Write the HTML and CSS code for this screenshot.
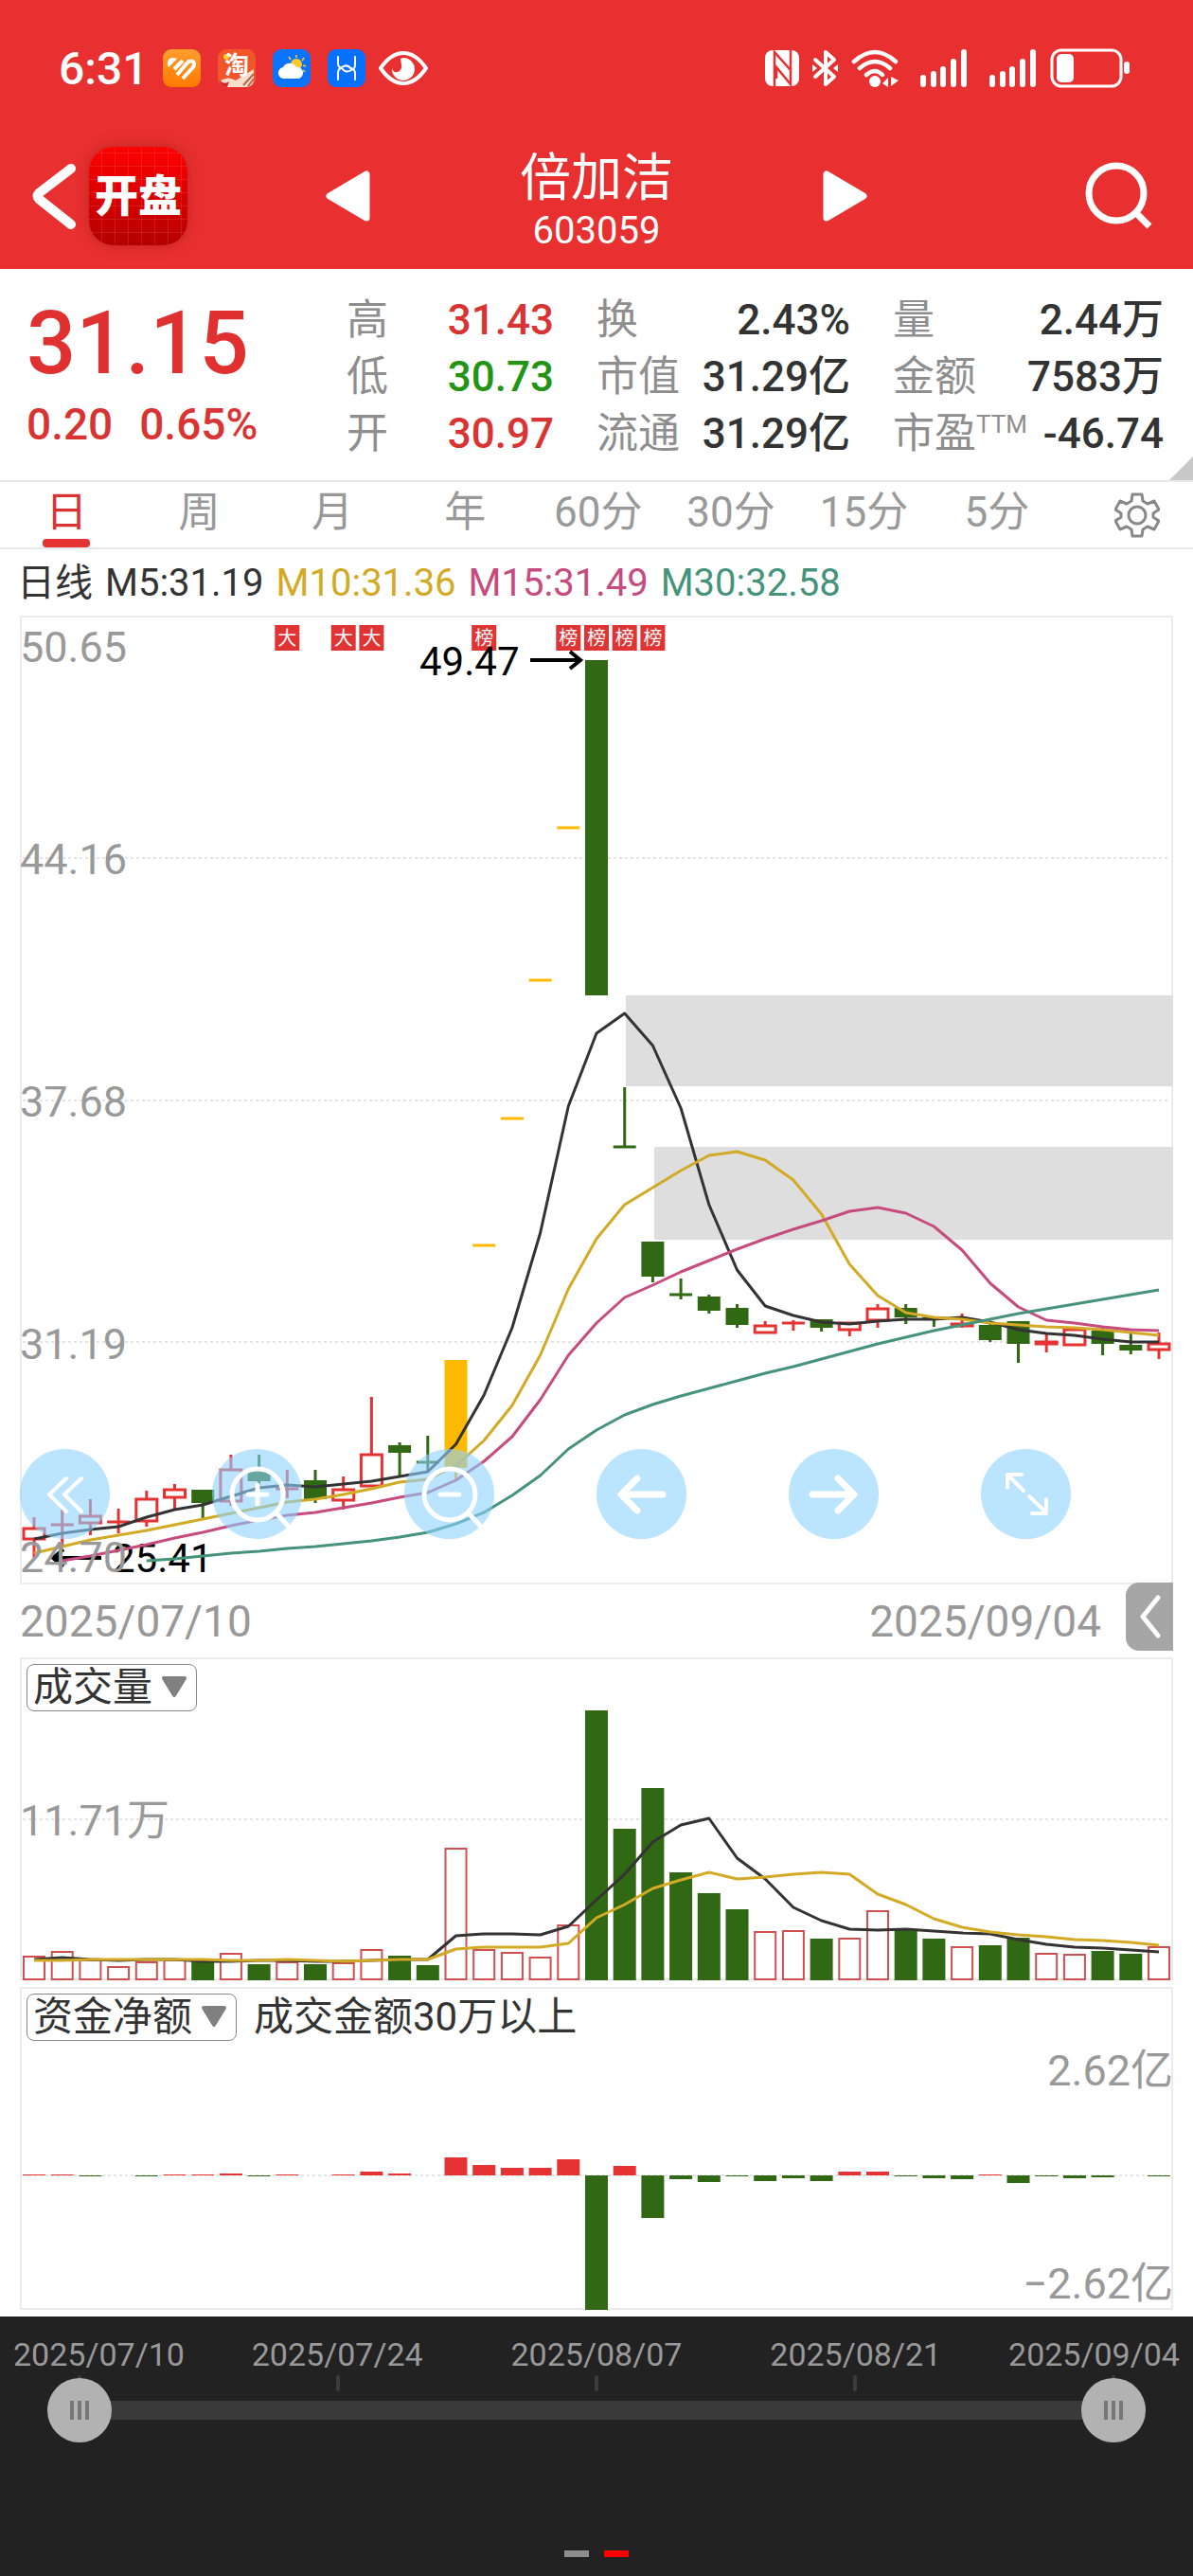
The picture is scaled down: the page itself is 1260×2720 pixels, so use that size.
FILE: index.html
```html
<!DOCTYPE html>
<html lang="zh-CN">

<head>
    <meta charset="UTF-8">
    <meta name="viewport" content="width=device-width, initial-scale=1">
    <title>倍加洁 603059</title>
    <link rel="stylesheet" href="styles.css">
</head>

<body>
    <header class="header">
        <div class="status">
            <span class="status-time">6:31</span>
            <div class="status-apps">
                <svg width="40" height="40" viewBox="0 0 40 40">
                    <defs>
                        <linearGradient id="gOrange" x1="0" y1="0" x2="0" y2="1">
                            <stop offset="0" stop-color="#ff9d2e" />
                            <stop offset="1" stop-color="#ff7a00" />
                        </linearGradient>
                    </defs>
                    <rect width="40" height="40" rx="9" fill="url(#gOrange)" />
                    <path d="M5 17q-1-8 6-8 3 0 4 1l-9 9z" fill="#fff" />
                    <path d="M12 21l9-9M15 27L27 13q6-2 6 3 0 2-2 4L21 31" fill="none" stroke="#fff" stroke-width="4" />
                </svg>
                <svg width="40" height="40" viewBox="0 0 40 40">
                    <rect width="40" height="40" rx="9" fill="#f2552a" />
                    <path d="M3 33q8-5 16 0l19-12v10q0 9-9 9H10q-5 0-7-7z" fill="#f7dfd0" />
                    <path d="M2 33q5 5 10 1l-2 6q-7 0-8-7z" fill="#d9232a" />
                    <path d="M27 38l11-12M32 39l6-8" stroke="#b5654a" stroke-width="2" />
                    <circle cx="9" cy="8" r="3" fill="#ffd21f" />
                    <text x="20" y="26" class="tao">淘</text>
                </svg>
                <svg width="40" height="40" viewBox="0 0 40 40">
                    <rect width="40" height="40" rx="9" fill="#0b74ff" />
                    <circle cx="25" cy="16" r="6" fill="#ffc928" />
                    <path d="M25 6v3M17 8l2 3M33 9l-2 3M35 18l-3-1M34 24l-2-2" stroke="#ffc928" stroke-width="1.5" />
                    <path d="M13 31a6 6 0 0 1-2-12 8 8 0 0 1 14 0 6 6 0 0 1 2 12z" fill="#fff" />
                </svg>
                <svg width="40" height="40" viewBox="0 0 40 40">
                    <rect width="40" height="40" rx="9" fill="#0670ff" />
                    <path d="M11 8v7M11 32v-7q0-4 4-6 6-4 10 2 4 1 4-5V8M29 32v-7q0-3-4-5M11 15q0 4 4 5 4 6 10 2" fill="none" stroke="#fff" stroke-width="2" stroke-linecap="round" />
                </svg>
                <svg width="52" height="40" viewBox="0 0 52 40">
                    <path d="M2 20Q13 4 26 4t24 16Q39 36 26 36T2 20z" fill="none" stroke="#fff" stroke-width="4" />
                    <path d="M26 9a12 12 0 1 1-12 11q1 5 6 4 5-2 4-8-1-5-1-6z" fill="#fff" />
                </svg>
            </div>
            <div class="status-icons">
                <svg width="36" height="38" viewBox="0 0 36 38">
                    <rect width="36" height="38" rx="8" fill="#fff" />
                    <path d="M10 38V2l17 19V10M27 0v36L12 18v12" fill="none" stroke="#e93030" stroke-width="2.5" />
                </svg>
                <svg width="27" height="40" viewBox="0 0 27 40">
                    <path d="M3 11l20 18-9 8V3l9 8L3 29" fill="none" stroke="#fff" stroke-width="4" stroke-linecap="round" stroke-linejoin="round" />
                    <path d="M0 16l5 4-5 4zM27 16l-5 4 5 4z" fill="#fff" />
                </svg>
                <svg width="59" height="40" viewBox="0 0 59 40">
                    <path d="M3 13q22-20 44 0M9 20q16-14 32 0M16 27q9-8 17 0" fill="none" stroke="#fff" stroke-width="4.5" stroke-linecap="round" />
                    <circle cx="25" cy="34" r="6" fill="#fff" />
                    <path d="M39 30v10l-6-4zM42 39V29l8 4z" fill="#fff" />
                </svg>
                <svg width="59" height="40" viewBox="0 0 59 40">
                    <path d="M3 30v7M14 26v11M24 21v16M35 13v24M46 3v34" stroke="#fff" stroke-width="6" stroke-linecap="round" />
                </svg>
                <svg width="50" height="40" viewBox="0 0 50 40">
                    <path d="M3 30v7M14 26v11M24 21v16M35 13v24M46 3v34" stroke="#fff" stroke-width="6" stroke-linecap="round" />
                </svg>
                <svg width="84" height="42" viewBox="0 0 84 42">
                    <rect x="2" y="2" width="73" height="38" rx="10" fill="none" stroke="#fff" stroke-width="3" />
                    <rect x="7" y="6" width="18" height="30" rx="5" fill="#fff" />
                    <rect x="78" y="14" width="6" height="13" rx="3" fill="#fff" />
                </svg>
            </div>
        </div>

        <div class="nav">
            <div class="nav-left">
                <button class="icon-btn" aria-label="返回">
                    <svg width="48" height="72" viewBox="0 0 48 72">
                        <path d="M43 7L9 33q-3 3 0 6l34 27" fill="none" stroke="#fff" stroke-width="10" stroke-linecap="round" stroke-linejoin="round" />
                    </svg>
                </button>
                <span class="logo">开盘</span>
            </div>
            <div class="nav-center">
                <button class="icon-btn" aria-label="上一只">
                    <svg width="47" height="54" viewBox="0 0 47 54">
                        <path d="M43 4v46L4 27z" fill="#fff" stroke="#fff" stroke-width="7" stroke-linejoin="round" />
                    </svg>
                </button>
                <div class="stock">
                    <h1>倍加洁</h1>
                    <span>603059</span>
                </div>
                <button class="icon-btn" aria-label="下一只">
                    <svg width="47" height="54" viewBox="0 0 47 54">
                        <path d="M4 4v46l39-23z" fill="#fff" stroke="#fff" stroke-width="7" stroke-linejoin="round" />
                    </svg>
                </button>
            </div>
            <button class="icon-btn btn-search" aria-label="搜索">
                <svg width="72" height="72" viewBox="0 0 72 72">
                    <circle cx="33" cy="33" r="29" fill="none" stroke="#fff" stroke-width="7" />
                    <path d="M54 54l14 14" stroke="#fff" stroke-width="7" />
                </svg>
            </button>
        </div>
    </header>

    <section class="quote">
        <div class="quote-main">
            <div class="price">31.15</div>
            <div class="change"><span>0.20</span><span>0.65%</span></div>
        </div>
        <dl class="stats">
            <div><dt>高</dt><dd class="up">31.43</dd></div>
            <div><dt>低</dt><dd class="down">30.73</dd></div>
            <div><dt>开</dt><dd class="up">30.97</dd></div>
        </dl>
        <dl class="stats">
            <div><dt>换</dt><dd>2.43%</dd></div>
            <div><dt>市值</dt><dd>31.29亿</dd></div>
            <div><dt>流通</dt><dd>31.29亿</dd></div>
        </dl>
        <dl class="stats">
            <div><dt>量</dt><dd>2.44万</dd></div>
            <div><dt>金额</dt><dd>7583万</dd></div>
            <div><dt>市盈<sup>TTM</sup></dt><dd>-46.74</dd></div>
        </dl>
    </section>

    <nav class="tabs">
        <div class="tabs-list">
            <button class="tab active">日</button>
            <button class="tab">周</button>
            <button class="tab">月</button>
            <button class="tab">年</button>
            <button class="tab">60分</button>
            <button class="tab">30分</button>
            <button class="tab">15分</button>
            <button class="tab">5分</button>
        </div>
        <button class="icon-btn btn-gear" aria-label="设置">
            <svg width="48" height="48" viewBox="0 0 48 48" fill="none" stroke="#888" stroke-width="3" stroke-linejoin="round">
                <path d="M19 2h10l1 7 5 3 7-3 5 9-6 4v4l6 4-5 9-7-3-5 3-1 7H19l-1-7-5-3-7 3-5-9 6-4v-4l-6-4 5-9 7 3 5-3z" />
                <circle cx="24" cy="24" r="9" />
            </svg>
        </button>
    </nav>

    <div class="legend">
        <span>日线</span>
        <span class="m5">M5:31.19</span>
        <span class="m10">M10:31.36</span>
        <span class="m15">M15:31.49</span>
        <span class="m30">M30:32.58</span>
    </div>

    <main class="charts">
        <div class="panel">
            <svg id="kline" class="chart" viewBox="0 0 1218 1023"></svg>
            <div class="tools">
                <button class="tool" aria-label="最早">
                    <svg viewBox="0 0 95 95"><path d="M49 31L31 48l18 18M65 31L47 48l18 18" stroke-width="4" /></svg>
                </button>
                <button class="tool" aria-label="放大">
                    <svg viewBox="0 0 95 95"><circle cx="48" cy="48" r="27" stroke-width="5" /><path d="M68 68l13 14M38 48h20M48 38v20" stroke-width="5" /></svg>
                </button>
                <button class="tool" aria-label="缩小">
                    <svg viewBox="0 0 95 95"><circle cx="48" cy="48" r="27" stroke-width="5" /><path d="M68 68l13 14M38 48h20" stroke-width="5" /></svg>
                </button>
                <button class="tool" aria-label="左移">
                    <svg viewBox="0 0 95 95"><path d="M70 48H27M43 31L26 48l17 17" stroke-width="7" /></svg>
                </button>
                <button class="tool" aria-label="右移">
                    <svg viewBox="0 0 95 95"><path d="M25 48h43M52 31l17 17-17 17" stroke-width="7" /></svg>
                </button>
                <button class="tool" aria-label="全屏">
                    <svg viewBox="0 0 95 95"><path d="M45 44L28 27M28 41V27h15M51 50l18 17M69 53v15H54" stroke-width="4" /></svg>
                </button>
            </div>
        </div>

        <div class="dates">
            <span>2025/07/10</span>
            <span class="date-end">2025/09/04</span>
            <button class="collapse" aria-label="展开">
                <svg width="24" height="48" viewBox="0 0 24 48">
                    <path d="M21 4L5 24l16 20" fill="none" stroke="#fff" stroke-width="5" stroke-linecap="round" stroke-linejoin="round" />
                </svg>
            </button>
        </div>

        <div class="panel panel-volume">
            <svg id="volume" class="chart" viewBox="0 0 1218 341"></svg>
            <div class="picker-row">
                <div class="picker">
                    <select aria-label="指标一">
                        <option>成交量</option>
                    </select>
                    <svg width="28" height="24" viewBox="0 0 28 24"><path d="M3 3h22L14 21z" /></svg>
                </div>
            </div>
        </div>

        <div class="panel">
            <svg id="fund" class="chart" viewBox="0 0 1218 341"></svg>
            <div class="picker-row">
                <div class="picker">
                    <select aria-label="指标二">
                        <option>资金净额</option>
                    </select>
                    <svg width="28" height="24" viewBox="0 0 28 24"><path d="M3 3h22L14 21z" /></svg>
                </div>
                <span>成交金额30万以上</span>
            </div>
        </div>
    </main>

    <footer class="footer">
        <ol class="axis">
            <li>2025/07/10</li>
            <li>2025/07/24</li>
            <li>2025/08/07</li>
            <li>2025/08/21</li>
            <li>2025/09/04</li>
        </ol>
        <div class="ticks"><i></i><i></i><i></i><i></i><i></i></div>
        <div class="range">
            <input type="range" min="0" max="40" value="0" aria-label="开始日期">
            <input type="range" min="0" max="40" value="40" aria-label="结束日期">
        </div>
        <div class="pager"><i></i><i class="on"></i></div>
    </footer>

    <script>
        const RED = "#e53333", GREEN = "#306813", YELLOW = "#ffb900";
        const STEP = 29.7, FIRST = 15, BAR = 24;

        // [type, high, top, bottom, low]
        const candles = [
            ["r", 952, 964, 975, 995], ["r", 944, 960, 960, 982], ["r", 933, 951, 958, 971], ["r", 943, 957, 957, 969],
            ["r", 924, 933, 956, 962], ["r", 917, 923, 931, 943], ["g", 923, 923, 937, 953], ["r", 886, 902, 935, 940],
            ["g", 886, 903, 914, 922], ["r", 902, 922, 922, 932], ["g", 902, 913, 933, 937], ["r", 909, 923, 934, 944],
            ["r", 825, 886, 919, 919], ["g", 873, 876, 884, 908], ["g", 866, 894, 894, 903], ["y", 786, 786, 900, 912],
            ["y", 665, 665, 665, 665], ["y", 531, 531, 531, 531], ["y", 385, 385, 385, 385], ["y", 224, 224, 224, 224],
            ["g", 47, 47, 401, 401], ["g", 498, 561, 561, 561], ["g", 661, 661, 698, 704], ["g", 700, 717, 717, 722],
            ["g", 717, 719, 734, 737], ["g", 727, 731, 749, 752], ["r", 745, 750, 757, 757], ["r", 744, 747, 748, 755],
            ["g", 743, 743, 752, 756], ["r", 746, 747, 754, 761], ["r", 727, 732, 744, 752], ["g", 727, 731, 741, 748],
            ["g", 742, 742, 742, 751], ["r", 737, 748, 750, 752], ["g", 747, 749, 765, 767], ["g", 745, 745, 769, 789],
            ["r", 759, 767, 769, 778], ["r", 753, 754, 770, 770], ["g", 750, 755, 769, 781], ["g", 757, 770, 776, 780],
            ["r", 757, 769, 775, 785]
        ];

        const ma5 = [975, 969, 965, 962, 952, 944, 939, 930, 921, 918, 920, 917, 914, 909, 904, 875, 823, 752, 652, 518, 441, 420, 454, 520, 622, 691, 729, 739, 746, 748, 745, 743, 743, 741, 746, 754, 758, 760, 764, 767, 767];
        const ma10 = [990, 983, 976, 971, 966, 960, 954, 948, 942, 936, 933, 928, 922, 915, 912, 898, 871, 834, 781, 711, 658, 622, 604, 586, 570, 566, 575, 596, 632, 685, 718, 736, 741, 743, 747, 749, 751, 752, 754, 757, 760];
        const ma15 = [998, 993, 987, 981, 974, 968, 961, 955, 950, 947, 942, 937, 931, 926, 913, 893, 867, 828, 781, 747, 720, 707, 693, 681, 669, 658, 648, 639, 629, 625, 631, 645, 670, 705, 730, 744, 747, 751, 754, 755];
        const ma30 = [998, 996, 993, 990, 988, 985, 983, 980, 977, 973, 968, 959, 947, 929, 908, 880, 860, 844, 833, 824, 816, 808, 800, 793, 785, 777, 769, 762, 755, 749, 743, 737, 732, 727, 722, 717, 712];

        const volume = [316, 311, 320, 327, 322, 320, 320, 313, 324, 322, 324, 323, 309, 315, 325, 202, 309, 312, 317, 283, 56, 181, 138, 227, 249, 266, 290, 289, 297, 297, 268, 288, 297, 306, 304, 296, 313, 314, 310, 313, 306];
        const volMa5 = [319, 317, 319, 320, 319, 319, 321, 321, 320, 320, 321, 321, 320, 319, 319, 294, 292, 292, 293, 284, 256, 229, 195, 177, 170, 212, 234, 264, 278, 287, 288, 287, 289, 291, 292, 298, 303, 306, 307, 309, 311];
        const volMa10 = [320, 320, 319, 319, 319, 319, 319, 320, 320, 319, 320, 321, 320, 319, 319, 308, 306, 306, 306, 302, 275, 261, 244, 235, 227, 234, 232, 229, 227, 229, 250, 261, 276, 285, 290, 293, 295, 298, 299, 301, 304];

        const fund = [1, 1, -1, 0, -1, 1, 1, 2, -1, 1, 0, 1, 4, 2, 0, 19, 11, 8, 8, 17, -142, 10, -45, -4, -7, -1, -6, -3, -6, 4, 4, -1, -3, -4, 1, -8, -1, -3, -2, 0, -1];

        const cx = i => FIRST + i * STEP;

        function rect(x, y, w, h, attrs) {
            return `<rect x="${x}" y="${y}" width="${w}" height="${h}" ${attrs}/>`;
        }

        function line(x1, y1, x2, y2, cls) {
            return `<line x1="${x1}" y1="${y1}" x2="${x2}" y2="${y2}" ${cls}/>`;
        }

        function curve(values, start, cls) {
            const pts = values.map((v, i) => `${cx(i + start)},${v}`).join(" ");
            return `<polyline class="curve ${cls}" points="${pts}"/>`;
        }

        function label(x, y, text, cls) {
            return `<text x="${x}" y="${y}" class="${cls}">${text}</text>`;
        }

        function frame(h) {
            return `<rect class="frame" x="1" y="1" width="1216" height="${h - 2}"/>`;
        }

        function drawKline() {
            let s = frame(1023);
            // gap zones
            s += rect(640, 401, 578, 96, 'fill="#dedede"');
            s += rect(670, 561, 548, 98, 'fill="#dedede"');
            [256, 512, 767].forEach(y => s += line(3, y, 1215, y, 'class="grid"'));

            candles.forEach(([type, high, top, bottom, low], i) => {
                const color = { r: RED, g: GREEN, y: YELLOW }[type];
                const x = cx(i);
                if (high < top) s += line(x, high, x, top, `stroke="${color}" stroke-width="3"`);
                if (low > bottom) s += line(x, bottom, x, low, `stroke="${color}" stroke-width="3"`);
                if (bottom - top < 2) {
                    s += line(x - 12, top, x + 12, top, `stroke="${color}" stroke-width="3"`);
                } else if (type === "r") {
                    s += rect(x - 11, top, 22, bottom - top, `fill="#fff" stroke="${color}" stroke-width="3"`);
                } else {
                    s += rect(x - 12, top, BAR, bottom - top, `fill="${color}"`);
                }
            });

            [[9, "大"], [11, "大"], [12, "大"], [16, "榜"], [19, "榜"], [20, "榜"], [21, "榜"], [22, "榜"]].forEach(([i, t]) => {
                s += rect(cx(i) - 13, 10, 26, 27, 'fill="#e03333"');
                s += label(cx(i), 31, t, "tag");
            });

            s += label(422, 63, "49.47", "note");
            s += '<path class="arrow" d="M539 47h52M581 38l11 9-11 9"/>';
            s += label(98, 1010, "25.41", "note");
            s += '<path class="arrow" d="M86 995H36M46 986l-11 9 11 9"/>';

            s += curve(ma5, 0, "c5") + curve(ma10, 0, "c10") + curve(ma15, 1, "c15") + curve(ma30, 4, "c30");

            [[49, "50.65"], [273, "44.16"], [529, "37.68"], [785, "31.19"], [1010, "24.70"]].forEach(([y, t]) => {
                s += label(0, y, t, "scale");
            });
            document.getElementById("kline").innerHTML = s;
        }

        function drawVolume() {
            let s = frame(341) + line(3, 171, 1215, 171, 'class="grid"');
            volume.forEach((top, i) => {
                if (candles[i][0] === "g") {
                    s += rect(cx(i) - 12, top, BAR, 341 - top, `fill="${GREEN}"`);
                } else {
                    s += rect(cx(i) - 11, top, 22, 340 - top, 'fill="#fff" stroke="#d05050" stroke-width="2"');
                }
            });
            s += curve(volMa5, 0, "c5") + curve(volMa10, 0, "c10");
            s += label(0, 188, "11.71万", "scale");
            document.getElementById("volume").innerHTML = s;
        }

        function drawFund() {
            let s = frame(341) + line(3, 199, 1215, 199, 'class="grid"');
            fund.forEach((v, i) => {
                if (v > 0) s += rect(cx(i) - 12, 199 - v, BAR, v, `fill="${RED}"`);
                if (v < 0) s += rect(cx(i) - 12, 199, BAR, -v, `fill="${GREEN}"`);
            });
            s += label(1218, 104, "2.62亿", "scale end");
            s += label(1218, 329, "−2.62亿", "scale end");
            document.getElementById("fund").innerHTML = s;
        }

        drawKline();
        drawVolume();
        drawFund();
    </script>
</body>

</html>
```

FILE: styles.css
```css
* {
    box-sizing: border-box;
}

body {
    margin: 0;
    min-height: 100vh;
    display: flex;
    flex-direction: column;
    background: #fff;
    color: #333;
    font-family: Roboto, "Noto Sans CJK SC", sans-serif;
}

button {
    border: none;
    background: none;
    padding: 0;
    font-family: inherit;
    cursor: pointer;
}

svg {
    display: block;
}

/* header */
.header {
    background: #e93030;
    color: #fff;
    padding-bottom: 14px;
}

.status {
    display: flex;
    align-items: center;
    height: 144px;
    padding: 0 67px 0 62px;
}

.status-time {
    font-size: 48px;
    font-weight: 500;
    width: 110px;
}

.status-apps {
    display: flex;
    gap: 18px;
}

.status-apps svg:last-child {
    margin-left: -4px;
}

.tao {
    fill: #fff;
    font-size: 26px;
    font-weight: 700;
    text-anchor: middle;
}

.status-icons {
    display: flex;
    align-items: center;
    gap: 14px;
    margin-left: auto;
}

.nav {
    display: grid;
    grid-template-columns: 1fr auto 1fr;
    align-items: center;
    height: 126px;
    padding: 0 32px;
}

.nav-left {
    display: flex;
    align-items: center;
    gap: 14px;
}

.logo {
    width: 104px;
    height: 104px;
    border-radius: 26px;
    background:
        repeating-linear-gradient(90deg, transparent 0 13px, rgba(255, 255, 255, .1) 13px 14px),
        repeating-linear-gradient(0deg, transparent 0 13px, rgba(255, 255, 255, .1) 13px 14px),
        linear-gradient(#ff0000, #b40000);
    box-shadow: 0 0 14px rgba(120, 20, 20, .4);
    font-size: 46px;
    font-weight: 900;
    line-height: 104px;
    text-align: center;
}

.nav-center {
    display: flex;
    align-items: center;
    justify-content: space-between;
    width: 572px;
}

.stock {
    display: flex;
    flex-direction: column;
    align-items: center;
    padding-top: 14px;
    font-size: 40px;
    line-height: 50px;
}

.stock h1 {
    margin: 0;
    font-size: 54px;
    font-weight: 400;
    line-height: 60px;
}

.btn-search {
    justify-self: end;
    margin-right: 10px;
}

/* quote */
.quote {
    display: grid;
    grid-template-columns: 1fr 219px 268px 286px;
    column-gap: 45px;
    position: relative;
    padding: 24px 31px 19px 28px;
    border-bottom: 2px solid #e8e8e8;
}

.quote::after {
    content: "";
    position: absolute;
    right: 0;
    bottom: 0;
    border-left: 25px solid transparent;
    border-bottom: 25px solid #c8c8c8;
}

.price {
    color: #e03030;
    font-size: 92px;
    font-weight: 500;
    line-height: 110px;
}

.change {
    display: flex;
    gap: 28px;
    color: #d93333;
    font-size: 46px;
    font-weight: 500;
    line-height: 60px;
}

.stats {
    margin: 0;
    font-size: 44px;
    line-height: 60px;
}

.stats div {
    display: flex;
    justify-content: space-between;
    white-space: nowrap;
}

.stats dt {
    color: #8e8e8e;
}

.stats dd {
    margin: 0;
    font-weight: 500;
}

.stats sup {
    font-size: 26px;
    line-height: 40px;
    vertical-align: top;
}

.stats .up {
    color: #d93333;
}

.stats .down {
    color: #239414;
}

/* period tabs */
.tabs {
    display: flex;
    align-items: center;
    height: 71px;
    padding-right: 35px;
    border-bottom: 2px solid #e8e8e8;
}

.tabs-list {
    display: grid;
    grid-template-columns: repeat(8, 1fr);
    flex: 1;
    height: 100%;
    margin-right: 54px;
}

.tab {
    position: relative;
    color: #999;
    font-size: 44px;
    line-height: 60px;
    padding-bottom: 6px;
    white-space: nowrap;
}

.tab.active {
    color: #d93333;
}

.tab.active::after {
    content: "";
    position: absolute;
    left: 50%;
    bottom: 0;
    width: 50px;
    height: 9px;
    margin-left: -25px;
    border-radius: 4px;
    background: #e53333;
}

.legend {
    display: flex;
    gap: 13px;
    padding: 2px 18px 0;
    font-size: 40px;
    line-height: 68px;
}

.m10 {
    color: #d3aa25;
}

.m15 {
    color: #c64b7e;
}

.m30 {
    color: #45937b;
}

/* charts */
.charts {
    margin: 0 21px;
}

.panel {
    position: relative;
}

.panel-volume {
    margin-bottom: 7px;
}

.chart {
    width: 100%;
    height: auto;
}

.frame {
    fill: none;
    stroke: #ebebeb;
    stroke-width: 2;
}

.grid {
    stroke: #e4e4e4;
    stroke-width: 2;
    stroke-dasharray: 3 3;
}

.curve {
    fill: none;
    stroke-width: 3;
    stroke-linejoin: round;
}

.c5 {
    stroke: #333;
}

.c10 {
    stroke: #d3aa25;
}

.c15 {
    stroke: #c64b7e;
}

.c30 {
    stroke: #45937b;
}

.scale {
    fill: #999;
    font-size: 45px;
}

.end {
    text-anchor: end;
}

.note {
    fill: #000;
    font-size: 42px;
}

.tag {
    fill: #fff;
    font-size: 20px;
    text-anchor: middle;
}

.arrow {
    fill: none;
    stroke: #000;
    stroke-width: 4;
}

.tools {
    position: absolute;
    left: 0;
    right: 108px;
    bottom: 48px;
    display: flex;
    justify-content: space-between;
}

.tool {
    width: 95px;
    height: 95px;
    border-radius: 50%;
    background: rgba(140, 210, 255, .6);
}

.tool svg {
    fill: none;
    stroke: #fff;
    stroke-linecap: round;
    stroke-linejoin: round;
}

.dates {
    display: flex;
    align-items: center;
    height: 77px;
    color: #999;
    font-size: 46px;
}

.date-end {
    margin-left: auto;
}

.collapse {
    display: flex;
    align-items: center;
    justify-content: center;
    width: 50px;
    height: 72px;
    margin: -10px 0 0 26px;
    border-radius: 14px 0 0 14px;
    background: #a6a6a6;
    position: relative;
}

.picker-row {
    position: absolute;
    top: 7px;
    left: 7px;
    display: flex;
    align-items: center;
    gap: 18px;
    font-size: 42px;
    line-height: 50px;
}

.picker {
    position: relative;
}

.picker select {
    display: block;
    appearance: none;
    height: 50px;
    padding: 0 45px 0 6px;
    border: 1px solid #888;
    border-radius: 8px;
    background: #fff;
    color: #333;
    font-family: inherit;
    font-size: 42px;
    line-height: 48px;
}

.picker svg {
    position: absolute;
    right: 10px;
    top: 12px;
    fill: #808080;
    stroke: #808080;
    stroke-width: 4;
    stroke-linejoin: round;
    pointer-events: none;
}

/* date range */
.footer {
    flex: 1;
    display: flex;
    flex-direction: column;
    margin-top: 7px;
    padding-bottom: 20px;
    background: #222;
}

.axis {
    display: grid;
    grid-template-columns: 3fr 4fr 4fr 4fr 3fr;
    margin: 18px 0 0;
    padding: 0 14px;
    list-style: none;
    color: #999;
    font-size: 34px;
    line-height: 44px;
    text-align: center;
}

.axis li:first-child {
    text-align: left;
}

.axis li:last-child {
    text-align: right;
}

.ticks {
    display: flex;
    justify-content: space-between;
    padding: 0 82px;
}

.ticks i {
    width: 4px;
    height: 17px;
    border-radius: 2px;
    background: #3c3c3c;
}

.range {
    position: relative;
    height: 68px;
    margin: -14px 50px 0;
    background: linear-gradient(#3a3a3a, #3a3a3a) center / calc(100% - 68px) 20px no-repeat;
}

.range input {
    position: absolute;
    inset: 0;
    width: 100%;
    height: 68px;
    margin: 0;
    appearance: none;
    background: none;
    pointer-events: none;
}

.range input::-webkit-slider-thumb {
    appearance: none;
    width: 68px;
    height: 68px;
    border-radius: 50%;
    pointer-events: auto;
    background:
        linear-gradient(90deg, #777 0 4px, transparent 4px 8px, #777 8px 12px, transparent 12px 16px, #777 16px 20px) center / 20px 20px no-repeat,
        #b2b2b2;
}

.pager {
    display: flex;
    justify-content: center;
    gap: 16px;
    margin-top: auto;
}

.pager i {
    width: 26px;
    height: 7px;
    background: #8e8e8e;
}

.pager .on {
    background: #f00;
}
```
